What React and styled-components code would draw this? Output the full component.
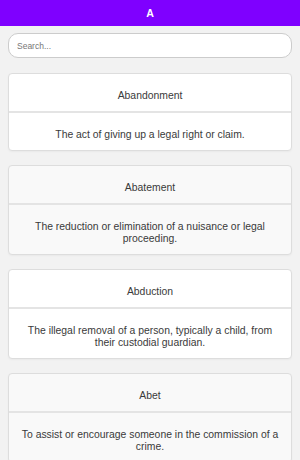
import styled, { createGlobalStyle } from "styled-components";

const GlobalStyle = createGlobalStyle`
  html, body {
    margin: 0;
    padding: 0;
    background: #f2f2f2;
    font-family: "Liberation Sans", Arial, sans-serif;
  }
  ::-webkit-scrollbar {
    width: 3px;
  }
  ::-webkit-scrollbar-track {
    background: transparent;
  }
  ::-webkit-scrollbar-thumb {
    background: #c4c4c4;
    border-radius: 2px;
  }
`;

const Header = styled.header`
  height: 26px;
  background: #7f00ff;
  color: #fff;
  font-weight: bold;
  font-size: 10.6px;
  display: flex;
  align-items: center;
  justify-content: center;
`;

const Main = styled.main`
  padding: 7px 8px 8px;
`;

const Search = styled.input`
  display: block;
  box-sizing: border-box;
  width: 100%;
  height: 25px;
  border: 1px solid #ccc;
  border-radius: 10px;
  background: #fff;
  padding: 0 8px;
  font-family: "Liberation Sans", Arial, sans-serif;
  font-size: 8.5px;
  color: #333;
  outline: none;

  &::placeholder {
    color: #777;
  }
`;

const List = styled.div`
  margin-top: 15px;
  display: flex;
  flex-direction: column;
  gap: 14px;
`;

const Card = styled.div`
  border: 1px solid #ddd;
  border-radius: 4px;
  background: ${(p) => (p.$alt ? "#f9f9f9" : "#fff")};
  box-shadow: 0 1px 2px rgba(0, 0, 0, 0.04);
  color: #3a3a3a;
  text-align: center;
  font-size: 10.4px;
  line-height: 12px;
`;

const Term = styled.div`
  padding: 16px 10px 9px;
  border-bottom: 2px solid #e4e4e4;
`;

const Definition = styled.div`
  padding: 16px 10px 9px;
`;

const terms = [
  ["Abandonment", "The act of giving up a legal right or claim."],
  ["Abatement", "The reduction or elimination of a nuisance or legal proceeding."],
  ["Abduction", "The illegal removal of a person, typically a child, from their custodial guardian."],
  ["Abet", "To assist or encourage someone in the commission of a crime."],
  ["Abrogation", "The formal repeal or cancellation of a law or agreement."],
  ["Absolute Liability", "Responsibility for harm regardless of fault or intent."],
  ["Abstract of Title", "A summary of the history of ownership of a piece of land."],
  ["Accessory", "A person who helps another commit a crime without being present."],
  ["Accomplice", "A person who knowingly participates in the commission of a crime."],
  ["Accord and Satisfaction", "An agreement to settle a claim by accepting a different performance."],
  ["Acquittal", "A judgment that a defendant is not guilty of the crime charged."],
  ["Actus Reus", "The physical act or conduct that constitutes a criminal offense."],
  ["Adjudication", "The legal process of resolving a dispute or deciding a case."],
  ["Affidavit", "A written statement confirmed by oath, used as evidence in court."],
  ["Alibi", "A claim that the accused was elsewhere when the crime occurred."],
  ["Amicus Curiae", "A person not a party to a case who offers information to the court."],
  ["Appeal", "A request to a higher court to review a lower court's decision."],
  ["Arraignment", "A court proceeding where a defendant is formally charged."],
  ["Arson", "The criminal act of deliberately setting fire to property."],
  ["Assault", "An act that causes another person to fear imminent harm."],
];

export default function App() {
  return (
    <>
      <GlobalStyle />
      <Header>A</Header>
      <Main>
        <Search type="text" placeholder="Search..." />
        <List>
          {terms.map(([term, def], i) => (
            <Card key={term} $alt={i % 2 === 1}>
              <Term>{term}</Term>
              <Definition>{def}</Definition>
            </Card>
          ))}
        </List>
      </Main>
    </>
  );
}
